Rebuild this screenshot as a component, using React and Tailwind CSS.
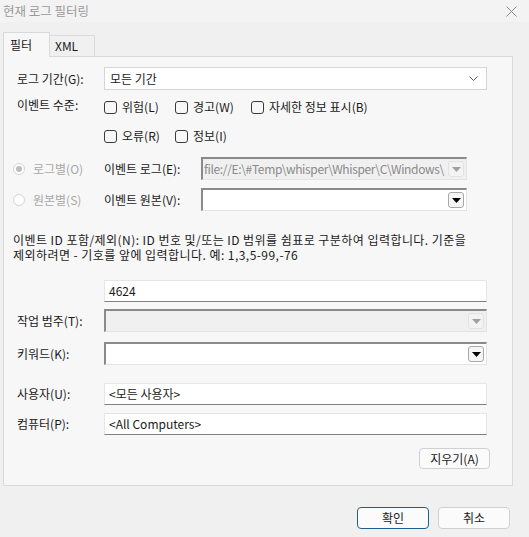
import React from 'react';

const font = { fontFamily: '"Noto Sans CJK KR", "Noto Sans", sans-serif' };

const Check = ({ label }) => (
  <label className="flex items-center gap-[5px]">
    <span className="w-[13px] h-[13px] rounded-[3px] border border-[#3a3a3a] bg-[#f7f7f7]" />
    <span>{label}</span>
  </label>
);

const DropBtn = ({ disabled }) => (
  <span className={`w-[16px] h-[16px] shrink-0 rounded-[3px] border flex items-center justify-center ${disabled ? 'border-[#e2e2e2] bg-[#f3f3f3]' : 'border-[#a8a8a8] bg-[#f6f6f6]'}`}>
    <svg width="9" height="5" viewBox="0 0 9 5">
      <path d="M0 0 L9 0 L4.5 5 Z" fill={disabled ? '#a0a0a0' : '#000'} />
    </svg>
  </span>
);

const Combo = ({ value, disabled, w }) => (
  <div className={`h-[23px] flex items-center border-t-2 border-l-2 border-t-[#8a8a8a] border-l-[#8a8a8a] border-r border-b border-r-[#e3e3e3] border-b-[#e3e3e3] pl-[1px] pr-[2px] ${disabled ? 'bg-[#f0f0f0] text-[#8a8a8a]' : 'bg-white'} ${w}`}>
    <span className="flex-1 overflow-hidden whitespace-nowrap text-[12px] tracking-[-0.35px]">{value}</span>
    <DropBtn disabled={disabled} />
  </div>
);

const TextBox = ({ value }) => (
  <div className="h-[22px] w-[383px] bg-white border border-[#e6e6e6] border-b-[#808080] flex items-center px-[4px] text-[12px]">
    {value}
  </div>
);

export default function App() {
  return (
    <div className="w-[529px] h-[537px] bg-[#f0f0f0] text-[12px] text-[#1a1a1a] relative overflow-hidden" style={font}>
      <div className="h-[22px] flex items-center justify-between pl-[3px] pr-[12px] bg-[#f3f3f3] text-[#9a9a9a] text-[12.5px]">
        <span>현재 로그 필터링</span>
        <svg width="11" height="11" viewBox="0 0 11 11">
          <path d="M0.5 0.5 L10.5 10.5 M10.5 0.5 L0.5 10.5" stroke="#8a8a8a" strokeWidth="1" />
        </svg>
      </div>

      <div className="mt-[10px] flex items-end pl-[3px] h-[24px] relative z-10">
        <div className="h-[25px] w-[47px] border border-b-0 border-[#dadada] bg-[#f7f7f7] flex items-center pl-[6px] mb-[-1px]">필터</div>
        <div className="h-[21px] w-[45px] border border-l-0 border-b-0 border-[#dadada] bg-[#f0f0f0] flex items-center pl-[5px]">XML</div>
      </div>

      <div className="ml-[3px] w-[510px] h-[430px] border border-[#dadada] bg-[#f7f7f7] pl-[9px] pt-[10px]">
        <div className="flex items-center h-[23px]">
          <span className="w-[91px] pl-[4px]">로그 기간(G):</span>
          <div className="w-[383px] h-[23px] bg-white border border-[#d6d6d6] flex items-center justify-between pl-[5px] pr-[8px]">
            <span>모든 기간</span>
            <svg width="9" height="5" viewBox="0 0 9 5">
              <path d="M0.5 0.5 L4.5 4.5 L8.5 0.5" stroke="#555" strokeWidth="1" fill="none" />
            </svg>
          </div>
        </div>

        <div className="flex mt-[6px]">
          <span className="w-[91px] pl-[4px] leading-[18px]">이벤트 수준:</span>
          <div className="flex flex-col gap-[11px] pt-[2px]">
            <div className="flex">
              <div className="w-[71px]"><Check label="위험(L)" /></div>
              <div className="w-[76px]"><Check label="경고(W)" /></div>
              <Check label="자세한 정보 표시(B)" />
            </div>
            <div className="flex">
              <div className="w-[71px]"><Check label="오류(R)" /></div>
              <Check label="정보(I)" />
            </div>
          </div>
        </div>

        <div className="flex items-center mt-[12px]">
          <div className="w-[91px] flex items-center gap-[8px] text-[#a8a8a8]">
            <span className="w-[12px] h-[12px] rounded-full border border-[#d4d4d4] bg-white flex items-center justify-center">
              <span className="w-[6px] h-[6px] rounded-full bg-[#bdbdbd]" />
            </span>
            <span>로그별(O)</span>
          </div>
          <span className="w-[97px]">이벤트 로그(E):</span>
          <Combo value={'file://E:\\#Temp\\whisper\\Whisper\\C\\Windows\\'} disabled w="w-[266px]" />
        </div>

        <div className="flex items-center mt-[8px]">
          <div className="w-[91px] flex items-center gap-[8px] text-[#a8a8a8]">
            <span className="w-[12px] h-[12px] rounded-full border border-[#d4d4d4] bg-white" />
            <span>원본별(S)</span>
          </div>
          <span className="w-[97px]">이벤트 원본(V):</span>
          <Combo value="" w="w-[266px]" />
        </div>

        <p className="mt-[21px] leading-[15px] w-[484px] tracking-[0.45px] break-keep">
          이벤트 ID 포함/제외(N): ID 번호 및/또는 ID 범위를 쉼표로 구분하여 입력합니다. 기준을 제외하려면 - 기호를 앞에 입력합니다. 예: 1,3,5-99,-76
        </p>

        <div className="flex mt-[18px] pl-[91px]">
          <TextBox value="4624" />
        </div>

        <div className="flex items-center mt-[7px]">
          <span className="w-[91px] pl-[4px]">작업 범주(T):</span>
          <Combo value="" disabled w="w-[383px]" />
        </div>

        <div className="flex items-center mt-[10px]">
          <span className="w-[91px] pl-[4px]">키워드(K):</span>
          <Combo value="" w="w-[383px]" />
        </div>

        <div className="flex items-center mt-[18px]">
          <span className="w-[91px] pl-[4px]">사용자(U):</span>
          <TextBox value="<모든 사용자>" />
        </div>

        <div className="flex items-center mt-[8px]">
          <span className="w-[91px] pl-[4px]">컴퓨터(P):</span>
          <TextBox value="<All Computers>" />
        </div>

        <div className="flex justify-end w-[477px] mt-[13px]">
          <button className="w-[71px] h-[21px] rounded-[4px] border border-[#d0d0d0] bg-[#fbfbfb] text-[12px] flex items-center justify-center">지우기(A)</button>
        </div>
      </div>

      <div className="flex justify-end gap-[9px] pr-[19px] mt-[21px]">
        <button className="w-[72px] h-[22px] rounded-[4px] border border-[#1f5f8f] bg-[#fbfbfb] text-[12px] flex items-center justify-center">확인</button>
        <button className="w-[72px] h-[22px] rounded-[4px] border border-[#d0d0d0] bg-[#fbfbfb] text-[12px] flex items-center justify-center">취소</button>
      </div>
    </div>
  );
}
